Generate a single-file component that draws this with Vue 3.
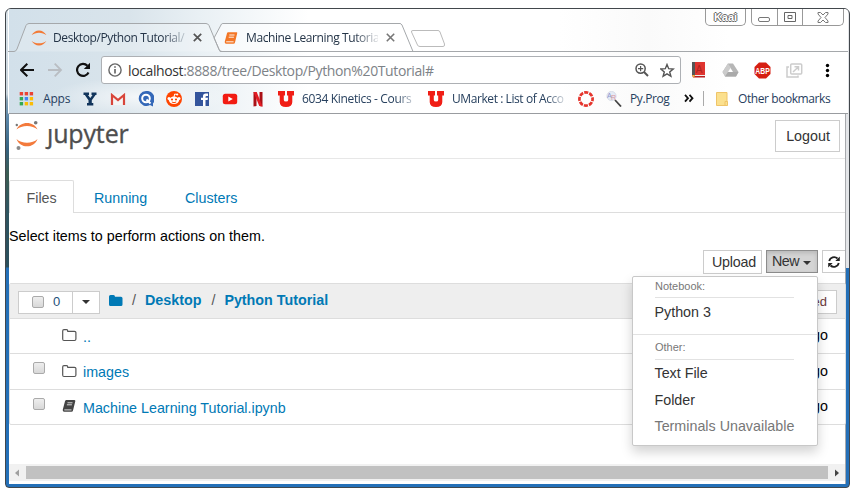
<script setup>
const files = [
  { name: '..', icon: 'folder', check: false },
  { name: 'images', icon: 'folder', check: true },
  { name: 'Machine Learning Tutorial.ipynb', icon: 'book', check: true },
]
const bookmarks = [
  { icon: 'apps', label: 'Apps', cls: 'apps' },
  { icon: 'y' }, { icon: 'gmail' }, { icon: 'q' }, { icon: 'reddit' }, { icon: 'fb' }, { icon: 'yt' }, { icon: 'n' },
  { icon: 'u', label: '6034 Kinetics - Cours', cls: 'clip kin' },
  { icon: 'u', label: 'UMarket : List of Acco', cls: 'clip umk' },
  { icon: 'ring' },
  { icon: 'pr', label: 'Py.Prog', cls: 'prog' },
]
const dots = [0, 5, 10]
const dotColors = ['#ea4335', '#ea4335', '#ea4335', '#34a853', '#4285f4', '#fbbc05', '#34a853', '#fbbc05', '#fbbc05']
</script>

<template>
  <div class="window">
    <div class="chrome">
      <div class="strip">
        <svg class="strip-art" width="840" height="43" viewBox="8 9 840 43" fill="none" stroke="#a5a8ab">
          <path d="M214 38L221.500 24Q222 23.500 223 23.500H400Q401 23.500 402 25L413 51.500H220L214 38" fill="#fff" fill-opacity=".5" />
          <path d="M8 51.500H14Q16 51.500 17 49L26 25.500Q27 23.500 29 23.500H206Q208 23.500 209 25.500L219 49.500Q220 51.500 222 51.500H848" fill="#fff" fill-opacity=".22" />
          <path d="M411.500 32Q411 30.500 413 30.500H438Q439.500 30.500 440 32L444.500 44Q445 46.500 443 46.500H420Q418 46.500 417.500 45Z" stroke="#bbb" fill="#fff" />
        </svg>
        <div class="tab first">
          <svg width="16" height="16" viewBox="0 0 16 16"><path d="M.5 5.300C4-1 12-1 15.500 5.300C11.500 1.800 4.500 1.800 .5 5.300ZM.5 10.700C4 17 12 17 15.500 10.700C11.500 14.200 4.500 14.200 .5 10.700Z" fill="#f37a36" /></svg>
          <span class="tab-title t1">Desktop/Python Tutorial/</span>
          <svg class="x" width="9" height="9" viewBox="0 0 9 9"><path d="M.8.8L8.200 8.200M8.200.8L.8 8.200" stroke="#555" stroke-width="1.700" /></svg>
        </div>
        <div class="tab second">
          <svg width="14" height="14" viewBox="0 0 14 14"><path d="M4 1.200H12.600Q13.500 1.300 13.200 2.300L11 11.500Q10.700 12.700 9.500 12.700H1.700Q.4 12 .8 10.500L3 2.200Q3.300 1.300 4 1.200Z" fill="#f37626" /><path d="M5.300 4H10.500M4.700 6.200H9.900M2.200 10.800H9.600" stroke="#fff" stroke-width=".9" fill="none" /></svg>
          <span class="tab-title t2">Machine Learning Tutoria</span>
          <svg class="x" width="9" height="9" viewBox="0 0 9 9"><path d="M.8.8L8.200 8.200M8.200.8L.8 8.200" stroke="#777" stroke-width="1.600" /></svg>
        </div>
        <div class="caption">
          <span class="user">Kaai</span>
          <div class="winbtns">
            <span class="min"><svg width="13" height="5"><rect x=".5" y=".5" width="11" height="4" rx="1.500" fill="#fff" stroke="#777" /></svg></span>
            <span><svg width="12" height="10"><path d="M.5.5H11.500V9.500H.5ZM4 3.500H8V6.500H4Z" fill="#fff" stroke="#666" /></svg></span>
            <span><svg width="12" height="11" viewBox="0 0 12 11"><path d="M1 .5H3.500L6 3L8.500 .5H11L11 2L8 5.500L11 9V10.500H8.500L6 8L3.500 10.500H1V9L4 5.500L1 2Z" fill="#fff" stroke="#777" /></svg></span>
          </div>
        </div>
      </div>

      <div class="toolbar">
        <svg class="nav" width="16" height="16" viewBox="0 0 16 16"><path d="M7.300 1.700L1 8L7.300 14.300M1 8H14" fill="none" stroke="#111" stroke-width="2" /></svg>
        <svg class="nav" width="16" height="16" viewBox="0 0 16 16"><path d="M6.700 1.700L13 8L6.700 14.300M13 8H0" fill="none" stroke="#b9bdc2" stroke-width="1.800" /></svg>
        <svg class="nav" width="16" height="16" viewBox="0 0 16 16"><path d="M12.500 10.500A6 6 0 1 1 11.400 3.800" fill="none" stroke="#111" stroke-width="2.200" /><path d="M14 .8V7H7.800Z" fill="#111" /></svg>
        <div class="omni">
          <svg width="14" height="14" viewBox="0 0 14 14"><circle cx="7" cy="7" r="6.100" fill="none" stroke="#666" stroke-width="1.400" /><path d="M7 6V10.500M7 3.200V4.800" stroke="#555" stroke-width="1.500" /></svg>
          <span class="url"><b>localhost</b>:8888/tree/Desktop/Python%20Tutorial#</span>
          <svg width="14" height="14" viewBox="0 0 14 14" fill="none" stroke="#555"><circle cx="5.600" cy="5.600" r="4.600" stroke-width="1.500" /><path d="M9 9L13 13" stroke-width="2" /><path d="M3 5.600H8.200M5.600 3V8.200" stroke-width="1.200" /></svg>
          <svg class="star" width="15" height="15" viewBox="0 0 15 15"><path d="M7 1.500L8.700 5.700L13.200 6L9.700 8.900L10.900 13.300L7 10.900L3.100 13.300L4.300 8.900L.8 6L5.300 5.700Z" fill="none" stroke="#555" stroke-width="1.400" /></svg>
        </div>
        <div class="exts">
          <svg width="16" height="16" viewBox="0 0 16 16"><path d="M1 0H14V13H1Z" fill="#df342f" /><path d="M1 0H4V13H1Z" fill="#555" /><path d="M1 13H14V15.500H2Z" fill="#b81f20" /><path d="M4 13.500H14" stroke="#eee" /><path d="M1 13L3 16L4 13Z" fill="#f4b63d" /><text x="4.800" y="11" font-size="10" fill="#ae2320" font-family="Liberation Sans">A</text></svg>
          <svg width="17" height="16" viewBox="0 0 17 16"><path d="M6 1.500H11L16.500 10L14 14.500H3L.5 10Z" fill="#b6b6b6" /><path d="M6 1.500L9 6L3.500 14.500L.5 10Z" fill="#ccc" /><path d="M8.500 6L11 10H6Z" fill="#fff" /><path d="M6 10H16.500L14 14.500H3Z" fill="#aaa" /></svg>
          <svg width="17" height="17" viewBox="0 0 17 17"><path d="M5 .5H12L16.500 5V12L12 16.500H5L.5 12V5Z" fill="#d61f12" /><text x="1.300" y="11.800" textLength="14.400" lengthAdjust="spacingAndGlyphs" font-size="9" font-weight="700" fill="#fff" font-family="Liberation Sans">ABP</text></svg>
          <svg width="17" height="15" viewBox="0 0 17 15" fill="none" stroke="#ccc" stroke-width="1.500"><rect x="4.700" y="1" width="11" height="10" rx="1" /><path d="M3 4H1V14H12V12.500M7 9L12.500 3.700M8.500 3.700H12.500V7.500" /></svg>
          <svg width="5" height="15" viewBox="0 0 5 15"><circle cx="2.500" cy="2.500" r="1.700" /><circle cx="2.500" cy="7.500" r="1.700" /><circle cx="2.500" cy="12.500" r="1.700" /></svg>
        </div>
      </div>

      <div class="bookmarks">
        <div v-for="(b, i) in bookmarks" :key="i" class="bm">
          <svg width="16" height="16" viewBox="0 0 16 16">
            <template v-if="b.icon === 'apps'">
              <template v-for="(r, ri) in dots" :key="r"><rect v-for="(c, ci) in dots" :key="c" :x="c + .7" :y="r + 1" width="3.400" height="3.400" :fill="dotColors[ri * 3 + ci]" /></template>
            </template>
            <path v-else-if="b.icon === 'y'" d="M1.500 1.500H7V4H6L8.300 7L10.500 4H9.500V1.500H14.500V4H13.500L9.800 9.200V12H11.300V14.500H5V12H6.500V9.200L2.800 4H1.500Z" fill="#12355c" />
            <template v-else-if="b.icon === 'gmail'"><path d="M1 3H15V14H1Z" fill="#f4f4f4" /><path d="M2 14V4L8 9L14 4V14" fill="none" stroke="#d8453a" stroke-width="2.200" /></template>
            <template v-else-if="b.icon === 'q'"><path d="M8 0A7.500 7.500 0 1 0 12 14L15 15.500V12.500A7.800 7.800 0 0 0 8 0Z" fill="#3468b8" /><circle cx="8" cy="7.500" r="3.800" fill="none" stroke="#fff" stroke-width="2" /><path d="M8.500 8.500L12.500 12.500" stroke="#fff" stroke-width="2" /></template>
            <template v-else-if="b.icon === 'reddit'"><circle cx="8" cy="8" r="8" fill="#ff4500" /><ellipse cx="8" cy="9.300" rx="5" ry="3.700" fill="#fff" /><circle cx="3" cy="7.500" r="1.500" fill="#fff" /><circle cx="13" cy="7.500" r="1.500" fill="#fff" /><circle cx="11.200" cy="3.500" r="1.100" fill="#fff" /><path d="M8 6L8.700 3L11 3.500" fill="none" stroke="#fff" /><circle cx="6" cy="8.500" r="1.100" fill="#ff4500" /><circle cx="10" cy="8.500" r="1.100" fill="#ff4500" /><path d="M5.800 11Q8 12.400 10.200 11" stroke="#ff4500" fill="none" /></template>
            <template v-else-if="b.icon === 'fb'"><rect x="1" y="1" width="14" height="14" fill="#34559c" /><path d="M9 15V9H7V6.700H9V5Q9 2.500 11.700 2.500H14V5H12.500Q11.500 5 11.500 6V6.700H14L13.600 9H11.500V15Z" fill="#fff" /></template>
            <template v-else-if="b.icon === 'yt'"><rect x=".8" y="2.800" width="14.400" height="10.500" rx="2.500" fill="#f21b12" /><path d="M6.300 5.500L10.800 8L6.300 10.500Z" fill="#fff" /></template>
            <template v-else-if="b.icon === 'n'"><path d="M3.500 1H6.500V15L3.500 15.500ZM9.500 1H12.500V15.500L9.500 15Z" fill="#aa1016" /><path d="M3.500 1H6.700L12.500 15.500L9.300 15Z" fill="#e31b23" /></template>
            <path v-else-if="b.icon === 'u'" d="M0 0H7V4.500H5.800V9Q5.800 10.500 8 10.500T10.200 9V4.500H9V0H16V4.500H14.300V11Q14.300 16 8 16T1.700 11V4.500H0Z" fill="#f01e16" />
            <circle v-else-if="b.icon === 'ring'" cx="8" cy="8" r="6.600" fill="none" stroke="#e5352d" stroke-width="2.700" stroke-dasharray="4.100 1.080" stroke-dashoffset="2" />
            <template v-else><circle cx="5.500" cy="5" r="4.600" fill="#e6ebf5" stroke="#ced6e4" stroke-width=".7" /><path d="M9 9L15 15.500" stroke="#444" stroke-width="1.800" /><text x="1" y="7" font-size="7" fill="#8e97cf" font-family="Liberation Sans">A</text><text x="5" y="9" font-size="7" fill="#dd96a0" font-family="Liberation Sans">R</text></template>
          </svg>
          <span v-if="b.label" class="bm-label" :class="b.cls">{{ b.label }}</span>
        </div>
        <svg class="more" width="10" height="9" viewBox="0 0 10 9"><path d="M1 .8L4 4.200L1 7.700M5.500 .8L8.500 4.200L5.500 7.700" fill="none" stroke="#111" stroke-width="1.800" /></svg>
        <i class="sep"></i>
        <svg class="note" width="12" height="14" viewBox="0 0 12 14"><path d="M.5.5H11V13.500H.5Z" fill="#fbe08e" stroke="#efc468" /><path d="M9 9.500H11.500V13.500H9Z" fill="#fbe08e" stroke="#efc468" /></svg>
        <span class="bm-label other">Other bookmarks</span>
      </div>
    </div>

    <main class="page">
      <header class="head">
        <svg width="24" height="30" viewBox="0 0 24 30"><path d="M1.500 9.500C5 .8 19 .8 22.500 9.500C17.500 4.800 6.500 4.800 1.500 9.500ZM1.500 19C5 28.800 19 28.800 22.500 19C17.500 24 6.500 24 1.500 19Z" fill="#f37a3c" /><circle cx="1.800" cy="5" r="1.200" fill="#777" /><circle cx="20.700" cy="2.800" r="1.800" fill="#777" /><circle cx="3.500" cy="28" r="2" fill="#8b8b8b" /></svg>
        <span class="brand"><span class="j">j</span>upyter</span>
        <button class="logout">Logout</button>
      </header>
      <nav class="tabs">
        <span class="active">Files</span><span class="run">Running</span><span>Clusters</span>
      </nav>
      <p class="hint">Select items to perform actions on them.</p>
      <div class="actions">
        <button class="upload">Upload</button>
        <div class="new-wrap">
          <button class="new">New<i class="caret"></i></button>
          <div class="menu">
            <div class="group nb">Notebook:</div>
            <div class="item py">Python 3</div>
            <div class="divider"></div>
            <div class="group ot">Other:</div>
            <div class="item tf">Text File</div>
            <div class="item fo">Folder</div>
            <div class="item off">Terminals Unavailable</div>
          </div>
        </div>
        <button class="refresh"><svg width="12" height="12" viewBox="0 0 12 12"><path d="M1.200 5A5 5 0 0 1 9.500 2.500M10.800 7A5 5 0 0 1 2.500 9.500" fill="none" stroke="#222" stroke-width="1.900" /><path d="M11.800.5V5H7.300ZM.2 11.500V7H4.700Z" fill="#222" /></svg></button>
      </div>
      <section class="list">
        <div class="list-head">
          <div class="select"><span class="cnt"><i class="box"></i>0</span><span class="drop"><i class="caret"></i></span></div>
          <svg class="home" width="14" height="12" viewBox="0 0 14 12"><path d="M0 1.500Q0 0 1.500 0H4.500Q6 0 6 1.700H12Q13.500 1.700 13.500 3.200V9.500Q13.500 11 12 11H1.500Q0 11 0 9.500Z" fill="#0079b5" /></svg>
          <div class="crumbs"><span class="slash s1">/</span><b class="desk">Desktop</b><span class="slash s2">/</span><b class="pt">Python Tutorial</b></div>
          <button class="modified">Modified</button>
        </div>
        <div v-for="f in files" :key="f.name" class="row">
          <i class="box" :class="{ none: !f.check }"></i>
          <svg v-if="f.icon === 'folder'" width="15" height="13" viewBox="0 0 15 13"><path d="M.7 2Q.7.700 2 .7H4.500Q5.800.700 5.800 2.300H12.500Q13.900 2.300 13.900 3.600V10Q13.900 11.500 12.500 11.500H2Q.7 11.500 .7 10Z" fill="none" stroke="#555" stroke-width="1.200" /></svg>
          <svg v-else width="15" height="13" viewBox="0 0 15 13"><path d="M4.500 0H12.500Q13.600.200 13.300 1.200L11 10.500Q10.700 11.700 9.500 11.700H1.700Q.4 11 .8 9.500L3 1.200Q3.400.100 4.500 0Z" fill="#444" /><path d="M5.500 2.800H10.500M4.900 4.800H9.900M2.300 9.900H9.500" stroke="#fff" stroke-width=".8" fill="none" /></svg>
          <span class="fname">{{ f.name }}</span>
          <span class="ago">ago</span>
        </div>
      </section>
      <div class="scroll">
        <svg width="17" height="16"><path d="M10 4.500V11.500L6 8Z" fill="#a0a0a0" /></svg>
        <i class="thumb"></i>
        <svg width="17" height="16"><path d="M7 4.500V11.500L11 8Z" fill="#444" /></svg>
      </div>
    </main>
  </div>
</template>

<style>
body { background: #fff; overflow: hidden; }
</style>
<style scoped>
* { box-sizing: border-box; }
svg { display: block; flex: none; }
i { display: block; flex: none; }
button { margin: 0; padding: 0; background: #fff; border: 1px solid #ccc; color: #333; font: inherit; white-space: nowrap; }
.window {
  width: 845px; height: 480px; margin: 8px 0 0 5px; border: 1px solid #42474c; border-radius: 6px 6px 4px 4px;
  padding: 0 0 3px 3px; overflow: hidden; display: flex; flex-direction: column;
  background: linear-gradient(#2470b8, #2470b8) right 0 top 259px / 3px 240px no-repeat,
    linear-gradient(#2470b8, #2470b8) left 0 bottom 0 / 100% 3px no-repeat,
    linear-gradient(#dce5eb 0, #c8d4dc 85px, #8aa3b4 91px, #5a86a8 110px, #36627f 140px, #3b5c52 165px, #2f5560 200px, #2b4f5c 258px, #2470b8 259px) left 0 top 0 / 3px 100% no-repeat,
    #e3e5e8;
}
.chrome {
  width: 840px; height: 105px; margin-left: -1px; border-bottom: 1px solid #999ca0; border-left: 1px solid #fff; flex: none;
  font-family: "Open Sans", "Noto Sans", sans-serif; font-size: 12px; color: #27405e;
  background: radial-gradient(ellipse 90px 20px at 130px 88px, #ffffffb0, #fff0), linear-gradient(90deg, #d2e0ea 0, #d9e4eb 120px, #e9f0f4 190px, #fff 300px, #fff 550px, #fafafa 640px, #fff 720px);
}
.strip { position: relative; height: 43px; display: flex; }
.strip-art { position: absolute; left: -1px; top: 0; }
.tab { position: relative; display: flex; align-items: center; height: 27px; margin-top: 15px; }
.first { margin-left: 22px; width: 193px; }
.second { width: 173px; }
.tab-title { white-space: nowrap; -webkit-mask-image: linear-gradient(90deg, #000 82%, #0002); color: #243447; }
.t1 { width: 134px; margin-left: 6px; letter-spacing: -.4px; }
.t2 { width: 132px; margin-left: 8px; letter-spacing: -.4px; }
.x { margin-left: 6px; }
.second .x { margin-left: 8px; }
.caption { display: flex; margin-left: auto; margin-right: 4px; height: 17px; gap: 5px; align-items: stretch; }
.user { width: 41px; border: 1px solid #999; border-top: 0; border-radius: 0 0 5px 5px; color: #fff; font: bold 11px/16px "Liberation Sans", sans-serif; text-align: center; text-shadow: 1px 0 #666, -1px 0 #666, 0 1px #666, 0 -1px #666; }
.winbtns { width: 93px; border: 1px solid #999; border-top: 0; border-radius: 0 0 5px 5px; display: grid; grid-template-columns: 25px 25px 1fr; }
.winbtns span { display: grid; place-items: center; }
.winbtns .min { padding-top: 5px; }
.winbtns span + span { border-left: 1px solid #999; }
.toolbar { height: 36px; display: flex; align-items: center; padding-left: 11px; }
.nav { margin-right: 12px; }
.omni { width: 580px; height: 28px; margin-left: -3px; border: 1px solid #adb0b4; border-radius: 3px; background: #fff; display: flex; align-items: center; padding: 0 5px 0 6px; }
.url { flex: 1; margin-left: 6px; font-size: 14px; letter-spacing: -.38px; color: #7d8287; white-space: nowrap; }
.url b { font-weight: 400; color: #333; }
.star { margin-left: 11px; }
.exts { display: flex; align-items: center; margin-left: 10px; gap: 15px; }
.exts svg:last-child { margin-left: 7px; }
.bookmarks { height: 25px; margin-top: -2px; display: flex; align-items: center; gap: 12px; padding: 0 0 0 10px; }
.bookmarks > * { flex: none; }
.bm { display: flex; align-items: center; gap: 8px; }
.bm-label { white-space: nowrap; line-height: 17px; }
.apps { width: 27px; letter-spacing: -.2px; }
.clip { width: 114px; -webkit-mask-image: linear-gradient(90deg, #000 82%, #0002); }
.kin { letter-spacing: -.35px; }
.umk { letter-spacing: -.42px; }
.prog { width: 41px; letter-spacing: -.4px; }
.more { margin-left: 1px; }
.sep { width: 1px; height: 15px; background: #aaa; margin-left: -3px; }
.other { width: 96px; margin-left: -2px; letter-spacing: -.42px; }
.page { width: 837px; flex: 1; background: #fff; border-right: 1px solid #a7a9ad; font: 14.3px/20px "Liberation Sans", Arial, sans-serif; color: #000; display: flex; flex-direction: column; }
.head { height: 45px; border-bottom: 1px solid #e7e7e7; display: flex; align-items: flex-start; padding: 6px 5px 0 6px; flex: none; }
.brand { margin: -4px 0 0 8px; font: 25px/34px "Open Sans", "Noto Sans", sans-serif; letter-spacing: -.15px; color: #4e4e4e; -webkit-text-stroke: .35px #4e4e4e; }
.j { display: inline-block; clip-path: inset(13px 0 0 -8px); }
.logout { width: 65px; height: 32px; margin-left: auto; padding: 0 0 1px 1px; }
.tabs { height: 33px; margin-top: 21px; border-bottom: 1px solid #ddd; display: flex; flex: none; color: #0079b5; line-height: 36px; }
.tabs span { padding-left: 21px; }
.tabs .active { width: 65px; height: 33px; border: 1px solid #ddd; border-bottom: 0; border-radius: 2px 2px 0 0; background: #fff; color: #555; padding-left: 16.500px; line-height: 34px; }
.tabs .run { width: 90px; padding-left: 20px; }
.hint { margin: 13px 0 0; height: 24px; }
.actions { display: flex; justify-content: flex-end; height: 23px; flex: none; }
.upload { width: 59px; height: 24px; letter-spacing: -.2px; padding: 0 0 1px 3px; }
.new-wrap { position: relative; margin-left: 4px; }
.new { width: 52px; height: 23px; background: #d4d4d4; border-color: #8c8c8c; display: flex; align-items: center; padding: 0 0 1px 5px; box-shadow: inset 0 2px 4px #0002; letter-spacing: -.5px; }
.caret { width: 0; border: 4.500px solid transparent; border-top-color: #333; border-bottom: 0; }
.new .caret { margin-left: 4px; margin-top: 3px; }
.refresh { width: 23px; height: 23px; margin-left: 4px; border-right: 0; display: flex; align-items: center; padding-left: 5px; }
.menu { position: absolute; z-index: 5; right: 0; top: 26px; width: 186px; height: 170px; background: #fff; border: 1px solid #c8c8c8; border-radius: 2px; box-shadow: 0 6px 12px #0000002d; color: #333; white-space: nowrap; }
.group { margin: 0 23px 0 22px; font-size: 11px; line-height: 20px; height: 21px; border-bottom: 1px solid #e2e2e2; color: #777; }
.item { margin-left: 21.500px; line-height: 27px; height: 27px; }
.py { height: 36px; line-height: 29px; }
.divider { height: 1px; background: #e2e2e2; }
.nb { line-height: 19px; }
.ot { height: 25px; line-height: 25px; }
.off { color: #777; line-height: 25px; }
.list { width: 837px; height: 142px; margin-top: 10px; border: 1px solid #ddd; border-radius: 2px; flex: none; }
.list-head { height: 34px; background: #eee; display: flex; align-items: center; padding: 0 8px; color: #0079b5; }
.select { width: 82px; height: 23px; border: 1px solid #ccc; background: #fff; display: flex; margin-right: 9px; margin-top: 2px; }
.cnt { width: 54px; border-right: 1px solid #ccc; display: flex; align-items: center; padding-left: 13px; gap: 9px; font-size: 13px; color: #24507a; }
.drop { flex: 1; display: grid; place-items: center; }
.box { width: 12px; height: 12px; border: 1px solid #aaa; border-radius: 2px; background: linear-gradient(#eee, #d8d8d8); }
.home { margin-bottom: 1px; }
.crumbs { display: flex; margin-bottom: 2px; }
.slash { color: #555; }
.s1 { margin: 0 9px; }
.s2 { margin: 0 9px 0 10px; }
.desk, .pt { font-size: 14.300px; }
.modified { width: 75px; height: 24px; margin-left: auto; margin-top: 2px; text-align: right; padding-right: 9px; font-size: 13px; color: #6b3a3a; }
.row { height: 35px; border-top: 1px solid #ddd; display: flex; align-items: center; padding: 0 17px 0 23px; }
.row:nth-child(3) { height: 36px; }
.row svg { margin-left: 17px; margin-right: 6px; margin-bottom: 1px; }
.row .box { margin-bottom: 7px; }
.none { visibility: hidden; }
.fname { color: #0079b5; padding-top: 1px; }
.ago { margin-left: auto; margin-top: -2px; }
.scroll { height: 17px; margin-top: 39px; background: #f1f1f1; display: flex; align-items: center; }
.thumb { flex: 1; height: 13px; background: #c1c1c1; }
</style>
